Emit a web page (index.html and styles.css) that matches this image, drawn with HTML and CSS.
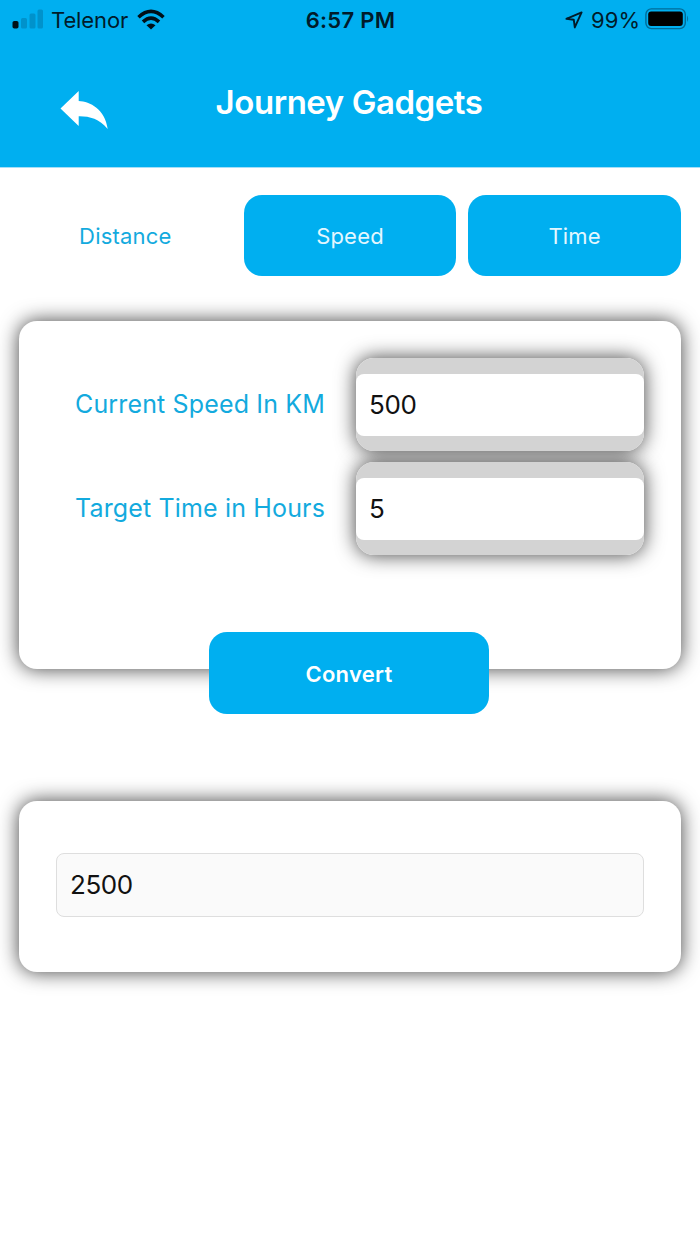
FILE: index.html
```html
<!DOCTYPE html>
<html lang="en">
<head>
<meta charset="utf-8">
<title>Journey Gadgets</title>
<link rel="stylesheet" href="styles.css">
</head>
<body>
<header class="header">
  <div class="status">
    <div class="status-left">
      <svg class="signal" width="32" height="20" viewBox="0 0 32 20">
        <rect x="0.5" y="12" width="6" height="7.5" rx="1.8" fill="#001018"/>
        <g fill="#0092cb"><rect x="9" y="9" width="6" height="10.5" rx="1.5"/><rect x="17.500" y="4.500" width="6" height="15" rx="1.500"/><rect x="25.500" y="0.500" width="5.500" height="19" rx="1.500"/></g>
      </svg>
      <span class="carrier">Telenor</span>
      <svg class="wifi" width="28" height="21" viewBox="0 0 28 21">
        <g fill="none" stroke="#001018" stroke-width="3.600"><path d="M1.500 8.200Q14 -3.400 26.500 8.200"/><path d="M6 12.900Q14 5.500 22 12.900"/></g>
        <path d="M9.500 16.300Q14 12.600 18.500 16.300L14 20.500Z" fill="#001018"/>
      </svg>
    </div>
    <span class="clock">6:57 PM</span>
    <div class="status-right">
      <svg class="location" width="18" height="18" viewBox="0 0 18 18"><path d="M1.400 7.800L16.600 1.400L9.800 16.400L8.800 8.800Z" fill="none" stroke="#001b2a" stroke-width="1.900" stroke-linejoin="round"/></svg>
      <span class="percent">99%</span>
      <svg class="battery" width="44" height="22" viewBox="0 0 44 22">
        <rect x="0.900" y="0.900" width="39.400" height="19.700" rx="5.500" fill="none" stroke="#006c98" stroke-width="1.400"/>
        <rect x="3.200" y="3.500" width="34.600" height="14.500" rx="3" fill="#000"/>
        <path d="M42 7.500Q44.300 10.700 42 14Z" fill="#0078a8"/>
      </svg>
    </div>
  </div>
  <div class="navbar">
    <svg class="back" width="48" height="39" viewBox="0 0 48 39"><path d="M0.500 17.500L18.700 0V10C30 10.500 45 18 47.700 38C39 27.500 29 25 18.700 25.200V35Z" fill="#fff"/></svg>
    <h1 class="title">Journey Gadgets</h1>
  </div>
</header>
<main class="content">
  <nav class="tabs">
    <button class="tab tab-active">Distance</button>
    <button class="tab">Speed</button>
    <button class="tab">Time</button>
  </nav>
  <section class="card form">
    <div class="row">
      <label class="label" for="speed">Current Speed In KM</label>
      <div class="field"><input class="input" id="speed" value="500"></div>
    </div>
    <div class="row">
      <label class="label" for="time">Target Time in Hours</label>
      <div class="field"><input class="input" id="time" value="5"></div>
    </div>
  </section>
  <button class="convert">Convert</button>
  <section class="card result">
    <input class="output" value="2500" readonly>
  </section>
</main>
</body>
</html>
```
FILE: styles.css
```css
* { box-sizing: border-box; }
body {
  margin: 0;
  min-height: 1244px;
  background: #fff;
  font-family: Inter, "Liberation Sans", sans-serif;
}
button, input { font-family: inherit; border: 0; margin: 0; }
svg { display: block; flex: none; }
.header {
  height: 168px;
  background: #00aff0;
  border-bottom: 1px solid #a6def7;
}
.status {
  display: grid;
  grid-template-columns: 1fr auto 1fr;
  align-items: center;
  height: 40px;
  padding: 0 11px 0 12px;
  color: #001b2a;
  font-size: 22px;
  line-height: 38px;
  white-space: nowrap;
}
.status-left, .status-right { display: flex; align-items: center; }
.signal, .wifi { margin-top: -2px; }
.status-right { justify-content: flex-end; }
.carrier { margin-left: 7px; letter-spacing: -0.1px; }
.wifi { margin-left: 9px; }
.clock { font-weight: 600; letter-spacing: 0.3px; }
.percent { margin: 0 5px 0 8px; }
.battery { margin: -3px 0 0; }
.navbar {
  display: grid;
  grid-template-columns: 155px 1fr 155px;
  align-items: start;
}
.back { margin: 51px 0 0 60px; }
.title {
  margin: 41px 2px 0 0;
  color: #fff;
  font-size: 33px;
  line-height: 42px;
  font-weight: 600;
  letter-spacing: -0.45px;
  text-align: center;
  white-space: nowrap;
}
.content {
  display: flex;
  flex-direction: column;
  padding: 27px 19px 0;
}
.tabs {
  display: grid;
  grid-template-columns: repeat(3, 1fr);
  gap: 12px;
}
.tab {
  height: 81px;
  padding: 0;
  border-radius: 18px;
  background: #00aff0;
  color: #e3f7ff;
  font-size: 22px;
  letter-spacing: 0.2px;
}
.tab-active { background: #fff; color: #13aade; }
.card {
  border-radius: 18px;
  background: #fff;
  box-shadow: 0 0 20px rgba(0, 0, 0, 0.75);
}
.form {
  isolation: isolate;
  display: flex;
  flex-direction: column;
  gap: 11px;
  height: 348px;
  margin-top: 45px;
  padding: 37px 37px 0 56px;
}
.row {
  display: flex;
  align-items: center;
  justify-content: space-between;
}
.label {
  margin-top: -1px;
  color: #13aade;
  font-size: 25px;
  letter-spacing: 0.15px;
  white-space: nowrap;
}
.field {
  position: relative;
  display: flex;
  align-items: center;
  width: 288px;
  height: 93px;
  border-radius: 18px;
  background: #d3d3d3;
}
/* Shadows sit beneath both fields so neither darkens its neighbour. */
.field::before {
  content: "";
  position: absolute;
  inset: 0;
  z-index: -1;
  border-radius: 18px;
  box-shadow: 0 0 20px rgba(0, 0, 0, 0.75);
}
.input {
  width: 288px;
  height: 62px;
  padding: 0 13px;
  border-radius: 8px;
  background: #fff;
  color: #111;
  font-size: 26px;
  letter-spacing: -0.3px;
}
.convert {
  position: relative;
  align-self: center;
  width: 280px;
  height: 82px;
  margin: -37px 2px 0 0;
  padding: 1px 0 0;
  border-radius: 18px;
  background: #00aff0;
  color: #fff;
  font-size: 22px;
  font-weight: 600;
  letter-spacing: 0.3px;
}
.result {
  height: 171px;
  margin-top: 87px;
  padding: 52px 37px 0;
}
.output {
  display: block;
  width: 100%;
  height: 64px;
  padding: 0 13px 1px;
  border: 1px solid #dedede;
  border-radius: 8px;
  background: #fafafa;
  color: #111;
  font-size: 26px;
  letter-spacing: -0.4px;
}
```
